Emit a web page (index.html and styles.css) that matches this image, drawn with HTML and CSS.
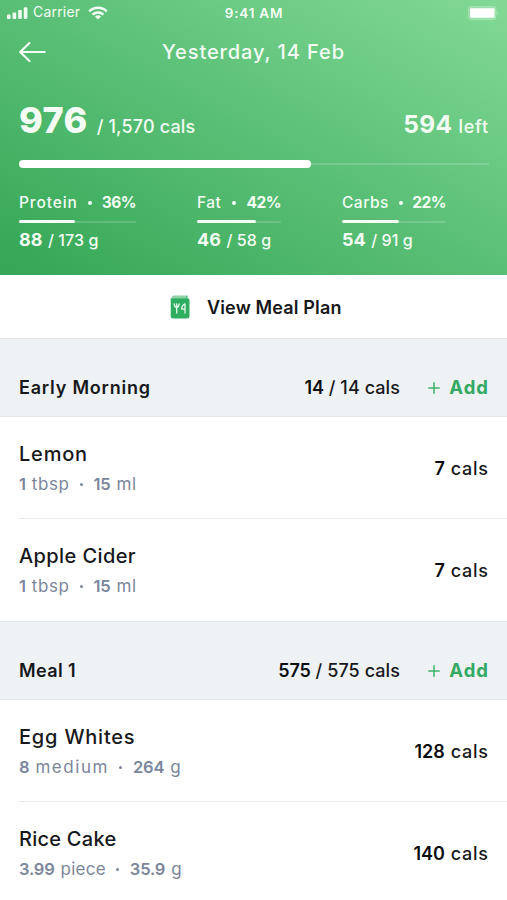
FILE: index.html
```
<!DOCTYPE html>
<html lang="en">
<head>
<meta charset="utf-8">
<meta name="viewport" content="width=device-width, initial-scale=1">
<title>Meal diary</title>
<link rel="stylesheet" href="styles.css">
</head>
<body>
<header class="hero">
  <div class="status">
    <div class="status-left">
      <svg width="21" height="14" viewBox="0 0 21 14" fill="#f0fbf2"><rect x="0" y="8.5" width="3.6" height="4.5" rx="1"/><rect x="5.6" y="6.5" width="3.6" height="6.5" rx="1"/><rect x="11.2" y="4" width="3.6" height="9" rx="1"/><rect x="16.8" y="1.2" width="3.6" height="11.8" rx="1"/></svg>
      <span class="carrier">Carrier</span>
      <svg width="20" height="14" viewBox="0 0 20 14" fill="none" stroke="#f4fcf5" stroke-width="2.4"><path d="M1.2 5.3C6.2.5 13.8.5 18.8 5.3"/><path d="M4.5 8.6C7.7 5.7 12.3 5.7 15.5 8.6"/><path d="M10 13.4 7 10.5c1.7-1.6 4.3-1.6 6 0z" fill="#f4fcf5" stroke="none"/></svg>
    </div>
    <span class="clock">9:41 AM</span>
    <svg class="battery" width="31" height="14" viewBox="0 0 31 14"><rect x=".5" y=".5" width="27.5" height="13" rx="2.5" fill="#fff" fill-opacity=".2" stroke="#fff" stroke-opacity=".22"/><rect x="2" y="2.2" width="24.5" height="9.6" rx="1" fill="#fff"/><path d="M29 4.5c1.6.8 1.6 4.2 0 5z" fill="#fff" fill-opacity=".3"/></svg>
  </div>
  <nav class="nav">
    <svg class="back" width="27" height="20" viewBox="0 0 27 20" fill="none" stroke="#f4fcf5" stroke-width="2.2" stroke-linecap="round" stroke-linejoin="round"><path d="M10.5 1 1.2 10l9.3 9M1.2 10h24.5"/></svg>
    <h1 class="title">Yesterday, 14 Feb</h1>
  </nav>
  <div class="totals">
    <div class="eaten"><b>976</b><span>/ 1,570 cals</span></div>
    <div class="left"><b>594</b><span>left</span></div>
  </div>
  <div class="progress"><div class="progress-fill"></div></div>
  <div class="macros">
    <section class="macro protein">
      <div class="macro-top"><span>Protein</span><i class="dot"></i><b>36%</b></div>
      <div class="bar"><div class="bar-fill"></div></div>
      <div class="macro-amount"><b>88</b><span>/ 173 g</span></div>
    </section>
    <section class="macro fat">
      <div class="macro-top"><span>Fat</span><i class="dot"></i><b>42%</b></div>
      <div class="bar"><div class="bar-fill"></div></div>
      <div class="macro-amount"><b>46</b><span>/ 58 g</span></div>
    </section>
    <section class="macro carbs">
      <div class="macro-top"><span>Carbs</span><i class="dot"></i><b>22%</b></div>
      <div class="bar"><div class="bar-fill"></div></div>
      <div class="macro-amount"><b>54</b><span>/ 91 g</span></div>
    </section>
  </div>
</header>
<main>
  <div class="plan">
    <svg width="20" height="24" viewBox="0 0 20 24"><path d="M4 .5h13v3H2C1.500 1.500 2.500.5 4 .5z" fill="#8fd3a5"/><path d="M1 3.200h16.500a2 2 0 0 1 2 2V21a2.500 2.500 0 0 1-2.500 2.500H3.200A2.500 2.500 0 0 1 .7 21V3.200z" fill="#2fae62"/><path d="M17 .5v3" stroke="#2fae62"/><g fill="none" stroke="#e6f8ec" stroke-width="1.300" stroke-linecap="round" stroke-linejoin="round"><path d="M4.300 8.800c0 2.600.8 3.500 2.400 3.500s2.400-.9 2.400-3.500M6.700 8.800V18M15 18V8.800c-2.200 1-3.300 3-3.400 5.400H15"/></g></svg>
    <span>View Meal Plan</span>
  </div>
  <div class="meal">
    <h2 class="track-8">Early Morning</h2>
    <div class="meal-cals"><b>14</b><span>/ 14 cals</span></div>
    <div class="add"><svg width="12" height="12" viewBox="0 0 12 12"><path d="M6 .3v11.400M.3 6h11.400" stroke="#3bb26a" stroke-width="1.500"/></svg><span>Add</span></div>
  </div>
  <ul>
    <li class="item">
      <div><div class="name track-8">Lemon</div><div class="detail"><b>1</b><span class="track-6">tbsp</span><i class="dot"></i><b>15</b><span class="track-6">ml</span></div></div>
      <div class="cals"><b>7</b><span>cals</span></div>
    </li>
    <li class="item">
      <div><div class="name track-4">Apple Cider</div><div class="detail"><b>1</b><span class="track-6">tbsp</span><i class="dot"></i><b>15</b><span class="track-6">ml</span></div></div>
      <div class="cals"><b>7</b><span>cals</span></div>
    </li>
  </ul>
  <div class="meal">
    <h2 class="track-4">Meal 1</h2>
    <div class="meal-cals"><b>575</b><span>/ 575 cals</span></div>
    <div class="add"><svg width="12" height="12" viewBox="0 0 12 12"><path d="M6 .3v11.400M.3 6h11.400" stroke="#3bb26a" stroke-width="1.500"/></svg><span>Add</span></div>
  </div>
  <ul>
    <li class="item">
      <div><div class="name track-8">Egg Whites</div><div class="detail"><b>8</b><span class="track-15">medium</span><i class="dot"></i><b>264</b><span>g</span></div></div>
      <div class="cals"><b>128</b><span>cals</span></div>
    </li>
    <li class="item">
      <div><div class="name track-2">Rice Cake</div><div class="detail"><b>3.99</b><span class="track-2">piece</span><i class="dot"></i><b>35.9</b><span>g</span></div></div>
      <div class="cals"><b>140</b><span>cals</span></div>
    </li>
  </ul>
</main>
</body>
</html>
```
FILE: styles.css
```
* { box-sizing: border-box; }
body {
  margin: 0;
  height: 900px;
  overflow: hidden;
  background: #fff;
  color: #17181b;
  font-family: Inter, sans-serif;
  font-weight: 500;
  white-space: nowrap;
}
h1, h2, ul { margin: 0; padding: 0; }
ul { list-style: none; }
svg { display: block; flex: none; }
.dot { width: 4px; height: 4px; border-radius: 50%; background: currentColor; flex: none; align-self: center; }
.track-2 { letter-spacing: .25px; }
.track-4 { letter-spacing: .4px; }
.track-6 { letter-spacing: .6px; }
.track-8 { letter-spacing: .8px; }
.track-15 { letter-spacing: 1.55px; }

.hero {
  height: 275px;
  background: linear-gradient(to top right, #34a654, #5abf76 50%, #82d995);
  color: #f4fdf5;
}
.status {
  height: 26px;
  padding: 0 8px 0 7px;
  display: grid;
  grid-template-columns: 1fr auto 1fr;
  align-items: center;
}
.status-left { display: flex; align-items: center; }
.carrier { font-size: 14px; line-height: 22px; font-weight: 400; letter-spacing: .2px; margin: 0 8px 2px 5px; }
.clock { font-size: 13.5px; font-weight: 600; letter-spacing: .8px; padding-left: 2px; }
.battery { justify-self: end; }
.nav {
  height: 52px;
  padding: 0 19px;
  display: grid;
  grid-template-columns: 27px 1fr 27px;
  align-items: center;
}
.title { font-size: 20px; line-height: 52px; font-weight: 500; letter-spacing: .9px; text-align: center; }
.totals {
  height: 44px;
  margin-top: 20px;
  padding: 0 18px 0 19px;
  display: flex;
  justify-content: space-between;
  align-items: baseline;
}
.eaten, .left { display: flex; align-items: baseline; font-size: 18px; line-height: 44px; }
.eaten { gap: 9px; }
.eaten b { font-size: 36px; letter-spacing: .4px; font-weight: 800; }
.eaten span { letter-spacing: .15px; }
.left { gap: 6px; }
.left b { font-size: 24.5px; letter-spacing: .3px; }
.left span { letter-spacing: .8px; }
.progress {
  height: 8px;
  margin: 18px 18px 0 19px;
  background: linear-gradient(rgba(255,255,255,.16), rgba(255,255,255,.16)) center / 100% 2px no-repeat;
}
.progress-fill { width: 292px; height: 8px; border-radius: 4px; background: #fff; }
.macros {
  padding: 22px 19px 0;
  display: grid;
  grid-template-columns: 178px 145px auto;
  justify-content: start;
}
.macro-top { display: flex; align-items: baseline; justify-content: space-between; font-size: 15.5px; line-height: 25px; }
.macro-top span { letter-spacing: .9px; }
.macro-top b { letter-spacing: -.5px; }
.protein { width: 117px; }
.fat { width: 84px; }
.carbs { width: 104px; }
.fat .macro-top span, .carbs .macro-top span { letter-spacing: .5px; }
.bar {
  height: 3px;
  margin: 5px 0;
  border-radius: 2px;
  background: linear-gradient(rgba(255,255,255,.16), rgba(255,255,255,.16)) center / 100% 2px no-repeat;
}
.bar-fill { height: 3px; border-radius: 2px; background: #f4fdf5; }
.protein .bar-fill { width: 56px; }
.fat .bar-fill { width: 59px; }
.carbs .bar-fill { width: 57px; }
.macro-amount { display: flex; align-items: baseline; gap: 5.5px; font-size: 16px; line-height: 24px; }
.macro-amount span { letter-spacing: .1px; }
.macro-amount b { font-size: 18px; }

.plan {
  height: 63px;
  padding: 1px 0 0 170px;
  display: flex;
  align-items: center;
  gap: 17px;
  font-size: 18px;
  font-weight: 600;
  letter-spacing: .15px;
}
.meal {
  height: 79px;
  padding: 33px 19px 0;
  display: flex;
  align-items: flex-start;
  background: #eef2f5;
  border-top: 1px solid #e3e7ea;
  border-bottom: 1px solid #e3e7ea;
  font-size: 18px;
  line-height: 31px;
}
.meal h2 { font-size: 18px; font-weight: 600; flex: 1; }
.meal-cals { display: flex; gap: 5px; margin-right: -1px; }
.meal b, .cals b { font-weight: 600; color: #0c0d0f; }
.meal-cals b { letter-spacing: -.2px; }
.meal-cals span { letter-spacing: .08px; }
.add { width: 60px; margin-left: 29px; display: flex; align-items: center; justify-content: space-between; color: #34a963; font-weight: 700; font-size: 18.5px; }
.add span { letter-spacing: 1px; margin-right: -1px; }

.item {
  height: 102px;
  margin-left: 19px;
  padding: 21px 19px 0 0;
  display: flex;
  justify-content: space-between;
  border-bottom: 1px solid #e7e9eb;
}
.item:last-child { border-bottom-color: transparent; }
.name { font-size: 20px; line-height: 32px; }
.detail { display: flex; align-items: baseline; gap: 6px; font-size: 17px; line-height: 28px; font-weight: 400; color: #7b869c; }
.detail b { font-size: 16.5px; font-weight: 600; letter-spacing: -.2px; }
.detail .dot { width: 3px; height: 3px; margin: 0 4.5px; }
.cals { display: flex; gap: 6px; font-size: 18px; line-height: 61px; }
.cals span { letter-spacing: .7px; margin-right: -.7px; }
```
